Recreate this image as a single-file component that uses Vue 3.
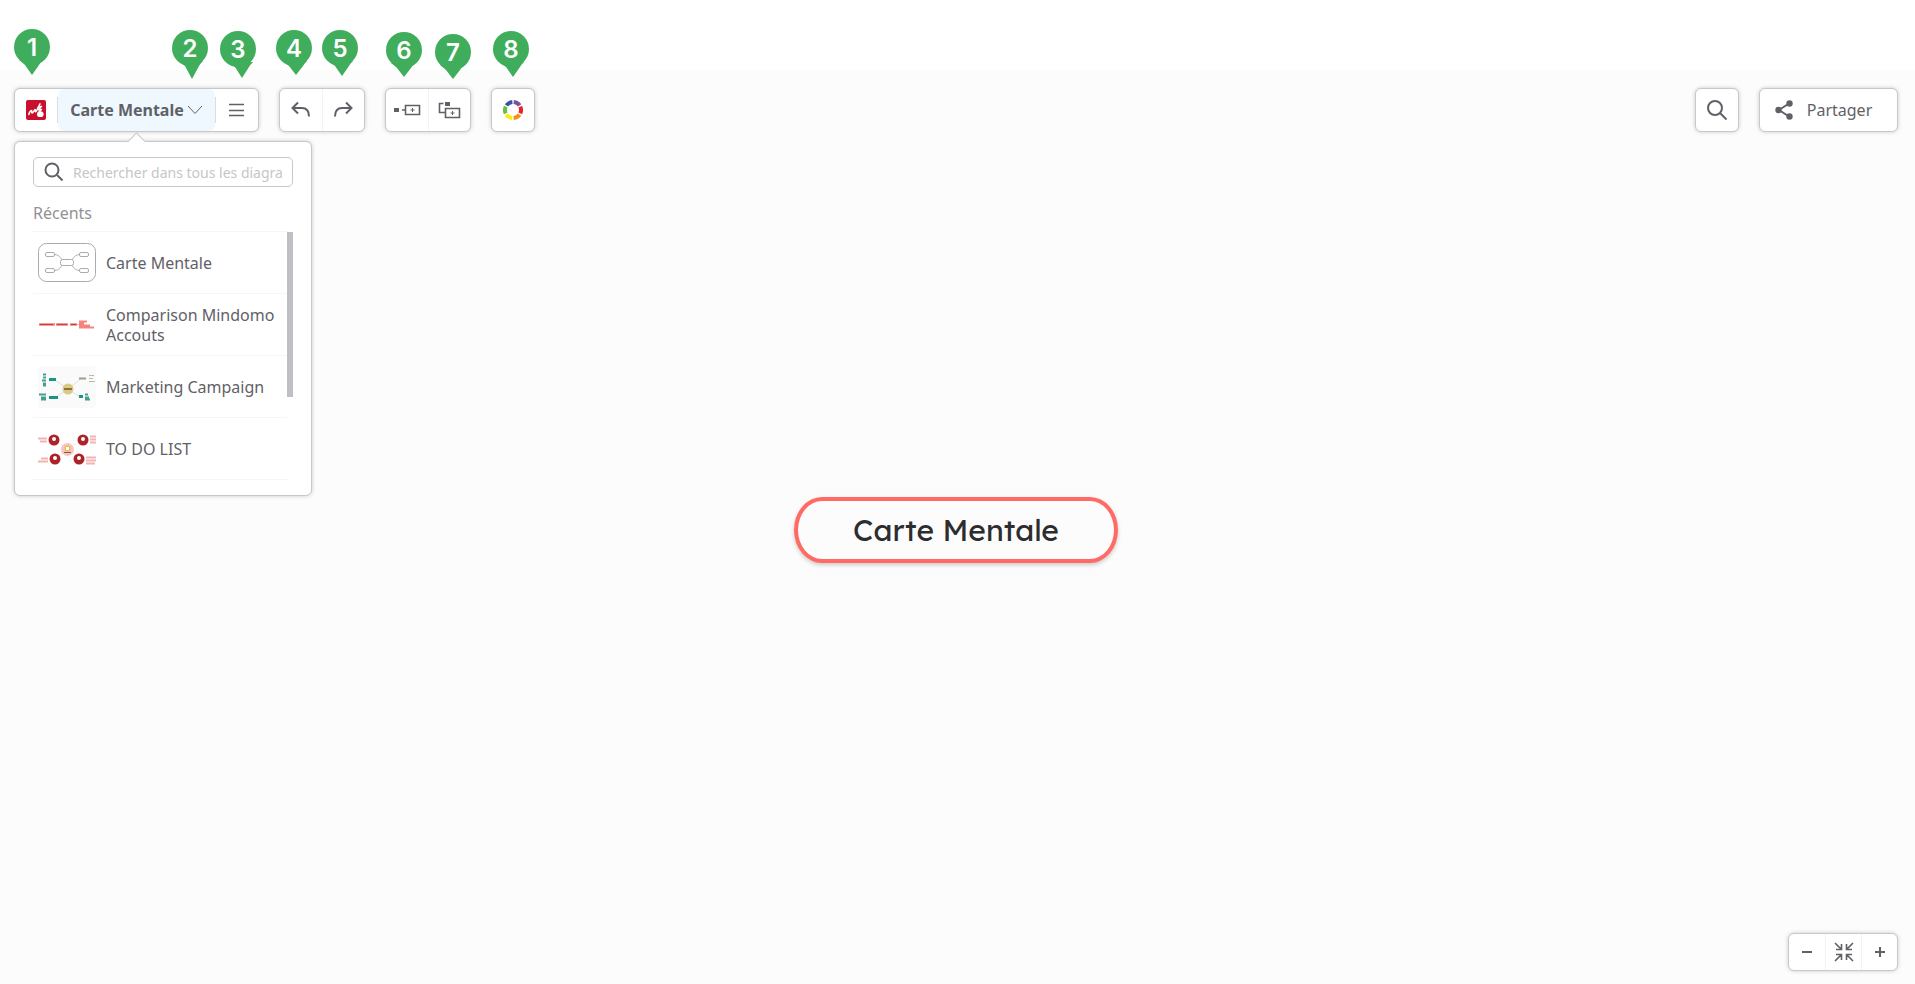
<template>
  <div class="page">
    <div class="strip"></div>

    <main class="workspace">
      <header class="topbar">
        <div class="group title-group">
          <button class="btn logo-btn" aria-label="Mindomo">
            <svg width="20" height="20" viewBox="0 0 20 20">
              <rect width="20" height="20" rx="2" fill="#c8102e" />
              <path d="M2.800 14.500C3.500 12 4.500 10.800 5.500 10.500C6.300 10.600 5.200 13 6.200 12.900C7.600 12.600 8 10 9 9.600C9.900 9.700 8.800 11.800 9.800 11.700C11 11 12 7.500 14 3.800" fill="none" stroke="#fff" stroke-width="1.500" stroke-linecap="round" stroke-linejoin="round" />
              <path d="M12.200 7.500L15.500 6.300L12.500 9.800L15.500 9.500L13 12" fill="none" stroke="#fff" stroke-width="1.400" stroke-linecap="round" stroke-linejoin="round" />
              <ellipse cx="14.300" cy="14.200" rx="3.300" ry="2.900" fill="#fff" />
            </svg>
          </button>
          <button class="btn title-btn" :aria-expanded="menuOpen" @click="menuOpen = !menuOpen">
            <span>Carte Mentale</span>
            <svg width="16" height="10" viewBox="0 0 16 10">
              <path d="M1 1L8 8.500L15 1" class="thin" />
            </svg>
          </button>
          <button class="btn menu-btn" aria-label="Menu">
            <svg width="16" height="14" viewBox="0 0 16 14">
              <path d="M0 1.500H15M0 7.500H15M0 12.500H15" class="line" />
            </svg>
          </button>

          <section v-if="menuOpen" class="dropdown">
            <label class="search-box">
              <svg width="20" height="20" viewBox="0 0 20 20">
                <circle cx="8" cy="8" r="6.500" class="bold" />
                <path d="M13 13L18.500 18.500" class="bold" />
              </svg>
              <input v-model="query" type="text" aria-label="Rechercher" placeholder="Rechercher dans tous les diagrammes" />
            </label>
            <h2 class="recent-title">Récents</h2>
            <div class="recent">
              <ul class="recent-list">
                <li v-for="item in recents" :key="item.id">
                  <a href="#" class="recent-item">
                    <svg v-if="item.id === 'map'" class="thumb" viewBox="0 0 58 42">
                      <g fill="none" stroke="#aaabae">
                        <rect x="0.500" y="1.500" width="57" height="38" rx="8" />
                        <rect x="7.500" y="10.500" width="9" height="4" rx="1.500" />
                        <rect x="41.500" y="10.500" width="9" height="4" rx="1.500" />
                        <rect x="7.500" y="26.500" width="9" height="4" rx="1.500" />
                        <rect x="41.500" y="26.500" width="9" height="4" rx="1.500" />
                        <rect x="22.500" y="17.500" width="13" height="6" rx="2" />
                        <path d="M16.500 12.500C22 13 22 16 24 17.500M41.500 12.500C36 13 36 16 34 17.500M16.500 28.500C22 28 22 25 24 23.500M41.500 28.500C36 28 36 25 34 23.500" />
                      </g>
                    </svg>
                    <svg v-else-if="item.id === 'compare'" class="thumb" viewBox="0 0 58 42">
                      <path d="M1 20.500H17M18 20.500H30M32 20.500H39" stroke="#f0807b" stroke-width="2.500" />
                      <path d="M2 20.500H15M19 20.500H29M33 20.500H38" stroke="#c9403c" />
                      <path d="M39 20.500H42" stroke="#f7b5b2" />
                      <path d="M41 17.500H49M41 19.500H46M41 21.500H52M41 23.500H56" stroke="#f5837e" stroke-width="2" />
                    </svg>
                    <svg v-else-if="item.id === 'marketing'" class="thumb" viewBox="0 0 58 42">
                      <rect width="58" height="42" rx="4" fill="#fafafa" />
                      <path d="M17 14L30 23L44 12M18 31L30 23L42 31" fill="none" stroke="#d5e5e0" />
                      <path d="M5 8.500H8M5 11.500H8M4 14.500H8M5 17.500H8M5 19.500H8M1 28.500H8M3 31.500H8M3 33.500H8M47 28.500H50M47 31.500H51M47 33.500H52" stroke="#44a08c" stroke-width="2" />
                      <path d="M11 13.500H18M11 31.500H20M41 30.500H45" stroke="#1a9583" stroke-width="3" />
                      <path d="M41 12.500H48" stroke="#a49d89" stroke-width="2" />
                      <path d="M51 9.500H56M51 12.500H55M51 15.500H57" stroke="#bdb9a5" />
                      <circle cx="30" cy="23" r="5.500" fill="#d9cc82" />
                      <path d="M26 23H34" stroke="#8d6f4e" stroke-width="2" />
                    </svg>
                    <svg v-else class="thumb" viewBox="0 0 58 42">
                      <path d="M16 12L30 21L44 12M17 31L30 21L41 31" fill="none" stroke="#f5dcda" stroke-dasharray="2 2" />
                      <path d="M0 10.500H9M2 13.500H9M52 8.500H58M52 11.500H58M52 14.500H58M3 30.500H10M0 33.500H10M48 29.500H58M48 32.500H58M48 35.500H57" stroke="#f4b3b0" stroke-width="2" />
                      <circle cx="29.500" cy="21.500" r="6.500" fill="#fbc3c0" />
                      <circle cx="29.500" cy="20.500" r="3" fill="#e8bd4d" />
                      <path d="M28 20.500H31" stroke="#fff" stroke-width="3" />
                      <path d="M26 24.500H33" stroke="#7d5c50" />
                      <g fill="#ac2228">
                        <circle cx="16" cy="12" r="5.500" />
                        <circle cx="45" cy="12" r="5.500" />
                        <circle cx="17" cy="31" r="5.500" />
                        <circle cx="41" cy="31" r="5.500" />
                      </g>
                      <g fill="#fff">
                        <circle cx="16" cy="11" r="2" />
                        <circle cx="45" cy="11" r="2" />
                        <circle cx="17" cy="30" r="2" />
                        <circle cx="41" cy="30" r="2" />
                      </g>
                    </svg>
                    <span>{{ item.name }}</span>
                  </a>
                </li>
              </ul>
              <div class="scroll-thumb"></div>
            </div>
          </section>
        </div>

        <div class="group">
          <button class="btn tool" aria-label="Annuler">
            <svg width="20" height="18" viewBox="0 0 20 18">
              <path d="M7 1.500L1.500 7L7 12.500M1.500 7H11Q18 7 18 15.500" class="bold" />
            </svg>
          </button>
          <button class="btn tool" aria-label="Rétablir">
            <svg width="20" height="18" viewBox="0 0 20 18">
              <path d="M12 1.500L17.500 7L12 12.500M17.500 7H8Q1 7 1 15.500" class="bold" />
            </svg>
          </button>
        </div>

        <div class="group">
          <button class="btn tool" aria-label="Insérer un sous-sujet">
            <svg width="28" height="20" viewBox="0 0 28 20">
              <rect x="1" y="8" width="5" height="4" fill="#5f6167" />
              <path d="M9 10H12.500M12.500 5.500H26.500V14.500H12.500Z" class="line" />
              <path d="M17.500 10H21.500M19.500 8V12" class="thin" />
            </svg>
          </button>
          <button class="btn tool" aria-label="Insérer un sujet">
            <svg width="28" height="20" viewBox="0 0 28 20">
              <rect x="9" y="2" width="5" height="4" fill="#5f6167" />
              <path d="M7.500 3.500H3.500V12.500H9M9.500 8.500H23.500V17.500H9.500Z" class="line" />
              <path d="M14.500 13H18.500M16.500 11V15" class="thin" />
            </svg>
          </button>
        </div>

        <div class="group">
          <button class="btn tool" aria-label="Thème">
            <svg width="20" height="20" viewBox="0 0 20 20">
              <circle
                v-for="(color, i) in wheel"
                :key="color"
                cx="10"
                cy="10"
                r="8"
                fill="none"
                :stroke="color"
                stroke-width="4"
                stroke-dasharray="7 44"
                :transform="`rotate(${i * 60 - 25} 10 10)`"
              />
            </svg>
          </button>
        </div>

        <div class="group search-group">
          <button class="btn tool" aria-label="Rechercher">
            <svg width="22" height="22" viewBox="0 0 22 22">
              <circle cx="9" cy="9" r="7" class="bold" />
              <path d="M14 14L20.500 20.500" class="bold" />
            </svg>
          </button>
        </div>
        <div class="group">
          <button class="btn share-btn">
            <svg width="18" height="20" viewBox="0 0 18 20">
              <path d="M14 3.500L4 10L14 16.500" class="bold" />
              <g fill="#5f6167">
                <circle cx="14.500" cy="3.500" r="3.200" />
                <circle cx="3.500" cy="10" r="3.200" />
                <circle cx="14.500" cy="16.500" r="3.200" />
              </g>
            </svg>
            <span>Partager</span>
          </button>
        </div>
      </header>

      <div class="canvas">
        <div class="node">Carte Mentale</div>
      </div>

      <div class="group zoom-group">
        <button class="btn" aria-label="Zoom arrière">
          <svg width="10" height="10" viewBox="0 0 10 10"><path d="M0 5H10" class="bold" /></svg>
        </button>
        <button class="btn" aria-label="Ajuster">
          <svg width="20" height="20" viewBox="0 0 20 20">
            <path d="M1 1L7.500 7.500M2 7.500H7.500V2M19 1L12.500 7.500M18 7.500H12.500V2M1 19L7.500 12.500M2 12.500H7.500V18M19 19L12.500 12.500M18 12.500H12.500V18" class="line" />
          </svg>
        </button>
        <button class="btn" aria-label="Zoom avant">
          <svg width="10" height="10" viewBox="0 0 10 10"><path d="M0 5H10M5 0V10" class="bold" /></svg>
        </button>
      </div>
    </main>

    <!-- numbered markers lying over the toolbar -->
    <svg
      v-for="(pin, i) in pins"
      :key="i"
      class="pin"
      width="36"
      height="50"
      viewBox="0 0 36 50"
      :style="{ left: pin.x + 'px', top: pin.y + 'px' }"
    >
      <circle cx="18" cy="18" r="18" fill="#40ad5c" />
      <path :d="tail(pin)" fill="#40ad5c" />
      <text x="18" y="27" text-anchor="middle">{{ i + 1 }}</text>
    </svg>
  </div>
</template>

<script setup>
import { ref } from 'vue';

const menuOpen = ref(true);
const query = ref('');

const recents = [
  { id: 'map', name: 'Carte Mentale' },
  { id: 'compare', name: 'Comparison Mindomo Accouts' },
  { id: 'marketing', name: 'Marketing Campaign' },
  { id: 'todo', name: 'TO DO LIST' }
];

const wheel = ['#ed2024', '#f68b1f', '#f9ed10', '#6abd45', '#3852a4', '#7650a1'];

// x, y: corner of the marker; tipX, tipY: where its tail ends
const pins = [
  { x: 14, y: 29, tipX: 18, tipY: 46 },
  { x: 172, y: 30, tipX: 20, tipY: 49 },
  { x: 220, y: 31, tipX: 22, tipY: 47 },
  { x: 276, y: 30, tipX: 20, tipY: 45 },
  { x: 322, y: 30, tipX: 20, tipY: 46 },
  { x: 386, y: 32, tipX: 18, tipY: 45 },
  { x: 435, y: 34, tipX: 18, tipY: 45 },
  { x: 493, y: 31, tipX: 20, tipY: 46 }
];

const tail = ({ tipX, tipY }) =>
  `M${tipX - 13} 31Q${tipX - 9} 34 ${tipX - 7} 36L${tipX} ${tipY}L${tipX + 7} 36Q${tipX + 8} 34 ${tipX + 11} 31Z`;
</script>

<style>
body {
  margin: 0;
  background: #fcfcfc;
}
</style>

<style scoped>
.page {
  position: relative;
  display: flex;
  flex-direction: column;
  min-height: 100vh;
  font-family: "Noto Sans", "Open Sans", sans-serif;
  font-size: 16px;
  color: #5f6167;
}

.strip {
  height: 70px;
  background: #fff;
}

.workspace {
  flex: 1;
  display: grid;
  background: #fcfcfc;
}

.topbar,
.canvas,
.zoom-group {
  grid-area: 1 / 1;
}

.topbar {
  z-index: 1;
  align-self: start;
  display: flex;
  gap: 20px;
  padding: 18px 17px 0 14px;
}

.group {
  box-sizing: border-box;
  display: flex;
  height: 44px;
  background: #fff;
  border: 1px solid #c8c8ca;
  border-radius: 6px;
  box-shadow: 0 0 4px rgba(0, 0, 0, 0.2);
}

.btn {
  box-sizing: border-box;
  display: flex;
  align-items: center;
  justify-content: center;
  padding: 0;
  border: none;
  background: none;
  font: inherit;
  color: inherit;
  cursor: pointer;
}

.tool {
  width: 42px;
}

.btn + .btn {
  border-left: 1px solid #f3f3f4;
}

.title-group {
  position: relative;
}

.logo-btn {
  width: 43px;
  padding-right: 1px;
}

.title-group .title-btn {
  gap: 3px;
  width: 157px;
  border: none;
  border-radius: 6px;
  background: #f0f8ff;
  font-weight: 700;
}

.title-group .menu-btn {
  width: 43px;
  border: none;
}

.title-btn::before,
.title-btn::after {
  content: "";
  position: absolute;
  top: 8px;
  width: 1px;
  height: 26px;
  background: #dadde2;
}

.title-btn::before {
  left: 42px;
}

.title-btn::after {
  right: 42px;
}

.search-group {
  margin-left: auto;
}

.share-btn {
  gap: 14px;
  width: 137px;
  padding-right: 10px;
}

.line,
.bold,
.thin {
  fill: none;
  stroke: #5f6167;
}

.line {
  stroke-width: 1.6;
}

.bold {
  stroke-width: 2;
}

.dropdown {
  position: absolute;
  top: 52px;
  left: -1px;
  box-sizing: border-box;
  width: 298px;
  padding: 15px 18px;
  background: #fff;
  border: 1px solid #c8c8ca;
  border-radius: 6px;
  box-shadow: 0 0 4px rgba(0, 0, 0, 0.2);
}

.dropdown::before {
  content: "";
  position: absolute;
  top: -7px;
  left: 115px;
  width: 12px;
  height: 12px;
  background: #fff;
  border: 1px solid #c8c8ca;
  border-width: 1px 0 0 1px;
  transform: rotate(45deg);
}

.search-box {
  box-sizing: border-box;
  display: flex;
  align-items: center;
  gap: 9px;
  height: 30px;
  padding: 0 10px;
  border: 1px solid #c8c8ca;
  border-radius: 5px;
}

.search-box svg {
  flex: none;
}

.search-box input {
  flex: 1;
  min-width: 0;
  padding: 0;
  border: none;
  outline: none;
  background: none;
  font: inherit;
  font-size: 14px;
  color: inherit;
}

.search-box input::placeholder {
  color: #c6c6c8;
}

.recent-title {
  margin: 0;
  padding: 16px 0 8px;
  font-size: 16px;
  font-weight: 400;
  line-height: 20px;
  color: #929294;
}

.recent {
  position: relative;
}

.recent-list {
  margin: 0 6px 0 0;
  padding: 0;
  border-top: 1px solid #f5f5f6;
  list-style: none;
}

.recent-item {
  box-sizing: border-box;
  display: flex;
  align-items: center;
  gap: 10px;
  height: 62px;
  padding-left: 5px;
  border-bottom: 1px solid #f5f5f6;
  line-height: 20px;
  color: inherit;
  text-decoration: none;
}

.thumb {
  flex: none;
  width: 58px;
  height: 42px;
}

.scroll-thumb {
  position: absolute;
  top: 1px;
  right: 0;
  width: 6px;
  height: 165px;
  background: #bfc0c6;
}

.canvas {
  display: flex;
  align-items: center;
  justify-content: center;
  padding: 6px 3px 0 0;
}

.node {
  box-sizing: border-box;
  width: 324px;
  padding: 9px 0;
  border: 4px solid #ff6b64;
  border-radius: 28px / 33px;
  background: #fcfcfc;
  box-shadow: 0 2px 4px rgba(0, 0, 0, 0.2);
  font-family: Lexend, Inter, sans-serif;
  font-size: 30px;
  line-height: 40px;
  text-align: center;
  color: #2d2d2f;
}

.zoom-group {
  z-index: 1;
  place-self: end;
  height: 38px;
  margin: 0 17px 13px 0;
}

.zoom-group .btn {
  width: 36px;
}

.pin {
  position: absolute;
  z-index: 2;
}

.pin text {
  font-family: Inter, sans-serif;
  font-size: 24px;
  font-weight: 600;
  fill: #fff;
}
</style>
